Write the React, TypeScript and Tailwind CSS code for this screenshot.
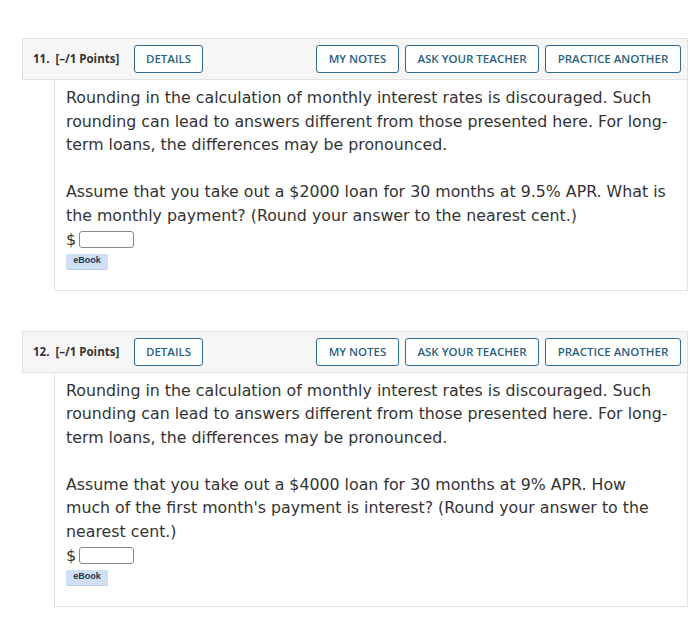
import React from 'react';

const body = "font-['DejaVu_Sans',Verdana,sans-serif]";

function Header({ num }: { num: number }) {
  return (
    <div className="flex h-[42px] items-center border border-[#e2e2e2] bg-[#f6f6f6] pl-[10px] pr-[6px]">
      <span className="w-[101px] font-['Open_Sans',sans-serif] text-[11.5px] font-bold text-[#333]">
        {num}.&nbsp; [–/1 Points]
      </span>
      <Btn className="w-[69px]">DETAILS</Btn>
      <div className="ml-auto flex gap-[6px]">
        <Btn className="w-[83px]">MY NOTES</Btn>
        <Btn className="w-[134px]">ASK YOUR TEACHER</Btn>
        <Btn className="w-[136px]">PRACTICE ANOTHER</Btn>
      </div>
    </div>
  );
}

function Btn({ children, className }: { children: React.ReactNode; className: string }) {
  return (
    <div
      className={`${className} flex h-[28px] items-center justify-center rounded-[3px] border-[1.5px] border-[#2d6a8e] bg-white font-['Open_Sans',sans-serif] text-[11.5px] font-semibold text-[#2b5f80]`}
    >
      {children}
    </div>
  );
}

function Answer() {
  return (
    <>
      <div className="mt-[1px] flex items-center gap-[3px]">
        <span className="text-[16px] text-[#333]">$</span>
        <div className="h-[17px] w-[55px] rounded-[3px] border border-[#888] bg-white" />
      </div>
      <div className="mt-[2px] flex h-[15px] w-[42px] items-center justify-center rounded-[2px] bg-[#cfe0f4] font-['Liberation_Sans',Arial,sans-serif] text-[9px] font-bold text-[#1f3550] shadow-[0_1px_0_#b9cbe0]">
        eBook
      </div>
    </>
  );
}

function Question({ num, children }: { num: number; children: React.ReactNode }) {
  return (
    <div>
      <Header num={num} />
      <div className="ml-[32px] border-x border-b border-[#e2e2e2] bg-white pl-[11px] pr-[17px] pt-[6px]">
        <div className={`${body} text-[15.8px] leading-[23.5px] text-[#333]`}>
          <p>
            Rounding in the calculation of monthly interest rates is discouraged. Such rounding can lead to answers
            different from those presented here. For long-term loans, the differences may be pronounced.
          </p>
          <p className="mt-[23.5px]">{children}</p>
          <Answer />
        </div>
        <div className="h-[21px]" />
      </div>
    </div>
  );
}

export default function App() {
  return (
    <div className="h-[619px] w-[700px] bg-white pl-[22px] pr-[12px] pt-[38px]">
      <Question num={11}>
        Assume that you take out a $2000 loan for 30 months at 9.5% APR. What is the monthly payment? (Round your
        answer to the nearest cent.)
      </Question>
      <div className="h-[40px]" />
      <Question num={12}>
        Assume that you take out a $4000 loan for 30 months at 9% APR. How much of the first month's payment is
        interest? (Round your answer to the nearest cent.)
      </Question>
    </div>
  );
}
